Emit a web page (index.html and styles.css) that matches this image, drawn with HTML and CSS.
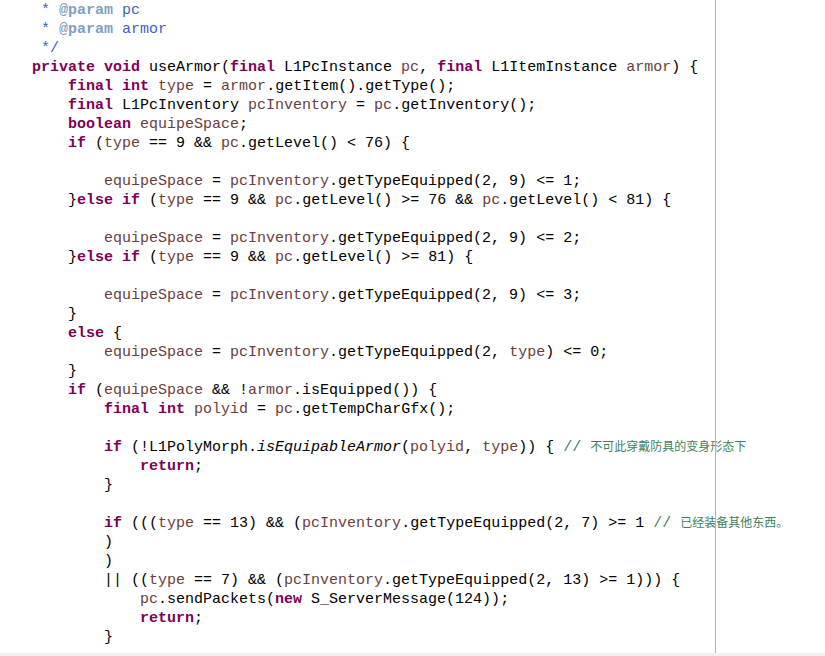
FILE: index.html
```html
<!DOCTYPE html>
<html>
<head>
<meta charset="utf-8">
<link rel="stylesheet" href="styles.css">
</head>
<body>
<div class="editor">
<pre class="code"><span class="jd"> * </span><span class="tag">@param</span><span class="jd"> pc</span>
<span class="jd"> * </span><span class="tag">@param</span><span class="jd"> armor</span>
<span class="jd"> */</span>
<span class="kw">private</span> <span class="kw">void</span> useArmor(<span class="kw">final</span> L1PcInstance <span class="v">pc</span>, <span class="kw">final</span> L1ItemInstance <span class="v">armor</span>) {
    <span class="kw">final</span> <span class="kw">int</span> <span class="v">type</span> = <span class="v">armor</span>.getItem().getType();
    <span class="kw">final</span> L1PcInventory <span class="v">pcInventory</span> = <span class="v">pc</span>.getInventory();
    <span class="kw">boolean</span> <span class="v">equipeSpace</span>;
    <span class="kw">if</span> (<span class="v">type</span> == 9 &amp;&amp; <span class="v">pc</span>.getLevel() &lt; 76) {

        <span class="v">equipeSpace</span> = <span class="v">pcInventory</span>.getTypeEquipped(2, 9) &lt;= 1;
    }<span class="kw">else</span> <span class="kw">if</span> (<span class="v">type</span> == 9 &amp;&amp; <span class="v">pc</span>.getLevel() &gt;= 76 &amp;&amp; <span class="v">pc</span>.getLevel() &lt; 81) {

        <span class="v">equipeSpace</span> = <span class="v">pcInventory</span>.getTypeEquipped(2, 9) &lt;= 2;
    }<span class="kw">else</span> <span class="kw">if</span> (<span class="v">type</span> == 9 &amp;&amp; <span class="v">pc</span>.getLevel() &gt;= 81) {

        <span class="v">equipeSpace</span> = <span class="v">pcInventory</span>.getTypeEquipped(2, 9) &lt;= 3;
    }
    <span class="kw">else</span> {
        <span class="v">equipeSpace</span> = <span class="v">pcInventory</span>.getTypeEquipped(2, <span class="v">type</span>) &lt;= 0;
    }
    <span class="kw">if</span> (<span class="v">equipeSpace</span> &amp;&amp; !<span class="v">armor</span>.isEquipped()) {
        <span class="kw">final</span> <span class="kw">int</span> <span class="v">polyid</span> = <span class="v">pc</span>.getTempCharGfx();

        <span class="kw">if</span> (!L1PolyMorph.<span class="it">isEquipableArmor</span>(<span class="v">polyid</span>, <span class="v">type</span>)) { <span class="cm">// <span class="cjk">不可此穿戴防具的变身形态下</span></span>
            <span class="kw">return</span>;
        }

        <span class="kw">if</span> (((<span class="v">type</span> == 13) &amp;&amp; (<span class="v">pcInventory</span>.getTypeEquipped(2, 7) &gt;= 1 <span class="cm">// <span class="cjk">已经装备其他东西。</span></span>
        )
        )
        || ((<span class="v">type</span> == 7) &amp;&amp; (<span class="v">pcInventory</span>.getTypeEquipped(2, 13) &gt;= 1))) {
            <span class="v">pc</span>.sendPackets(<span class="kw">new</span> S_ServerMessage(124));
            <span class="kw">return</span>;
        }</pre>
<div class="margin-line"></div>
</div>
<div class="bottom-strip"></div>
</body>
</html>
```

FILE: styles.css
```css
html, body {
  margin: 0;
  padding: 0;
  background: #ffffff;
  overflow: hidden;
}

.editor {
  position: relative;
  height: 653px;
  overflow: hidden;
}

.code {
  margin: 0;
  padding: 1px 0 0 32px;
  font-family: "Liberation Mono", "DejaVu Sans Mono", monospace;
  font-size: 15px;
  line-height: 19px;
  color: #000000;
  white-space: pre;
}

.kw {
  color: #7f0055;
  font-weight: bold;
}

.v {
  color: #6a3e3e;
}

.jd {
  color: #3f5fbf;
}

.tag {
  color: #7f9fbf;
  font-weight: bold;
}

.it {
  font-style: italic;
}

.cm {
  color: #3f7f5f;
}

.cjk {
  font-family: "Noto Sans CJK SC", sans-serif;
  font-size: 12px;
  line-height: 12px;
}

.margin-line {
  position: absolute;
  left: 715px;
  top: 0;
  width: 1px;
  height: 653px;
  background: #b4b4b4;
}

.bottom-strip {
  height: 3px;
  background: #f0f0f0;
}
```
